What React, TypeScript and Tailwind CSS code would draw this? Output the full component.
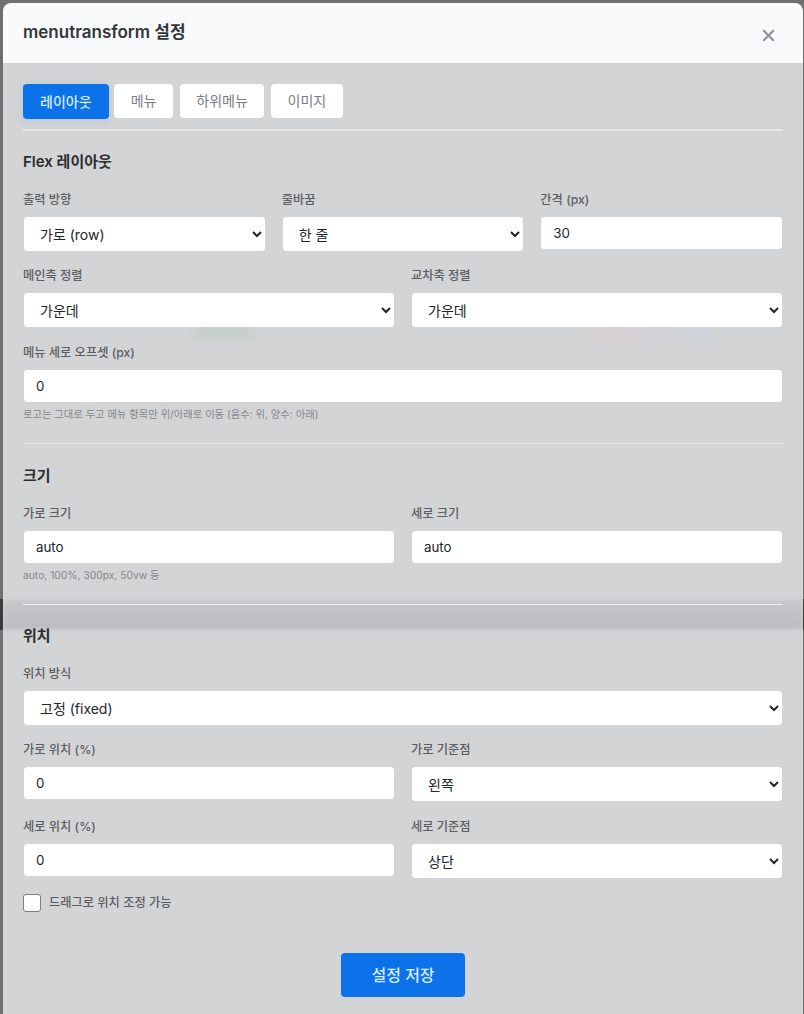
import React from "react";
import { X } from "lucide-react";

const fieldBox = "block w-full rounded border-x border-transparent bg-white bg-clip-padding text-[#212529] outline-none";

function Label({ children }: { children: React.ReactNode }) {
  return <label className="block h-[18px] mb-[8px] text-[12.25px] leading-[18px] font-medium text-[#5b5e62]">{children}</label>;
}

function Select({ label, value }: { label: string; value: string }) {
  return (
    <div>
      <Label>{label}</Label>
      <select defaultValue={value} className={`${fieldBox} h-[34px] px-3 text-sm`}>
        <option>{value}</option>
      </select>
    </div>
  );
}

function Input({ label, value }: { label: string; value: string }) {
  return (
    <div>
      <Label>{label}</Label>
      <input defaultValue={value} className={`${fieldBox} h-[32px] px-3 mb-[2px] text-[13.33px]`} />
    </div>
  );
}

function Heading({ children }: { children: React.ReactNode }) {
  return <h3 className="h-[22px] text-[15px] leading-[22px] font-semibold text-[#2b2d30] mb-[18px]">{children}</h3>;
}

function Help({ children }: { children: React.ReactNode }) {
  return <p className="mt-[2px] h-[16px] text-[10.3px] leading-[16px] text-[#85888c]">{children}</p>;
}

function Tab({ children, active }: { children: React.ReactNode; active?: boolean }) {
  return (
    <button
      className={
        active
          ? "h-[35px] rounded bg-[#0b72ea] px-[17px] mr-[-1px] text-sm font-medium text-[#d8ecff] shadow-[0_2px_8px_rgba(13,110,253,0.12)]"
          : "h-[34px] rounded-sm bg-white px-[16.5px] text-sm text-[#7a7d81]"
      }
    >
      {children}
    </button>
  );
}

export default function App() {
  return (
    <div className="relative h-[1014px] overflow-hidden bg-[#6f7072] pt-[3px] pl-[3px] pr-px font-['Inter','Noto_Sans_CJK_KR',sans-serif]">
      {/* dark row of the page behind, seen at the window edges */}
      <div className="absolute left-0 right-0 top-[599px] h-[31px] bg-[#3a3b3d]" />

      <div className="relative h-[1011px] w-[800px] overflow-hidden rounded-t-lg bg-[#d3d4d6]">
        {/* blurred page behind the modal */}
        <div className="absolute left-0 right-0 top-[597px] h-[29px] bg-linear-to-b from-[#c6c8ca] to-[#b9bbbe] blur-[2px]" />
        <div className="absolute left-[190px] top-[322px] h-[14px] w-[60px] bg-[#c3cfc8] blur-[6px]" />
        <div className="absolute left-[590px] top-[326px] h-[12px] w-[120px] bg-linear-to-r from-[#dccdcd] to-[#c9d2e0] blur-[6px]" />

        <div className="relative flex h-[60px] items-center justify-between rounded-t-lg bg-[#f9fafb] pl-[20px] pr-[25px]">
          <h2 className="text-[17px] font-semibold text-[#33363a]">menutransform 설정</h2>
          <X size={19} strokeWidth={2.6} className="mt-[5px] text-[#8d9094]" />
        </div>

        <div className="relative px-[20px] pt-[21px]">
          <div className="flex items-start gap-[6.75px] border-b-2 border-[#e6e7e9] pb-[10px] h-[47px]">
            <Tab active>레이아웃</Tab>
            <Tab>메뉴</Tab>
            <Tab>하위메뉴</Tab>
            <Tab>이미지</Tab>
          </div>

          <div className="pt-[20px]">
            <Heading>Flex 레이아웃</Heading>
            <div className="grid grid-cols-3 gap-x-4">
              <Select label="출력 방향" value="가로 (row)" />
              <Select label="줄바꿈" value="한 줄" />
              <Input label="간격 (px)" value="30" />
            </div>
            <div className="mt-[16px] grid grid-cols-2 gap-x-4">
              <Select label="메인축 정렬" value="가운데" />
              <Select label="교차축 정렬" value="가운데" />
            </div>
            <div className="mt-[17px] flex flex-col">
              <Input label="메뉴 세로 오프셋 (px)" value="0" />
              <Help>로고는 그대로 두고 메뉴 항목만 위/아래로 이동 (음수: 위, 양수: 아래)</Help>
            </div>
          </div>

          <div className="mt-[21px] border-t border-[#e6e7e9] pt-[21px]">
            <Heading>크기</Heading>
            <div className="grid grid-cols-2 gap-x-4">
              <Input label="가로 크기" value="auto" />
              <Input label="세로 크기" value="auto" />
            </div>
            <Help>auto, 100%, 300px, 50vw 등</Help>
          </div>

          <div className="mt-[21px] border-t border-[#f1f2f3] pt-[20px]">
            <Heading>위치</Heading>
            <Select label="위치 방식" value="고정 (fixed)" />
            <div className="mt-[16px] grid grid-cols-2 gap-x-4">
              <Input label="가로 위치 (%)" value="0" />
              <Select label="가로 기준점" value="왼쪽" />
            </div>
            <div className="mt-[17px] grid grid-cols-2 gap-x-4">
              <Input label="세로 위치 (%)" value="0" />
              <Select label="세로 기준점" value="상단" />
            </div>
            <label className="mt-[16px] flex items-center gap-2 text-[12.25px] font-medium text-[#5b5e62]">
              <input type="checkbox" className="h-[18px] w-[18px] appearance-none rounded-[3px] border border-[#7b7d80] bg-white" />
              드래그로 위치 조정 가능
            </label>
          </div>

          <div className="mt-[41px] flex justify-center">
            <button className="h-[44px] w-[124px] rounded bg-[#0b72ea] text-base font-medium text-[#d8ecff]">설정 저장</button>
          </div>
        </div>
      </div>
    </div>
  );
}
